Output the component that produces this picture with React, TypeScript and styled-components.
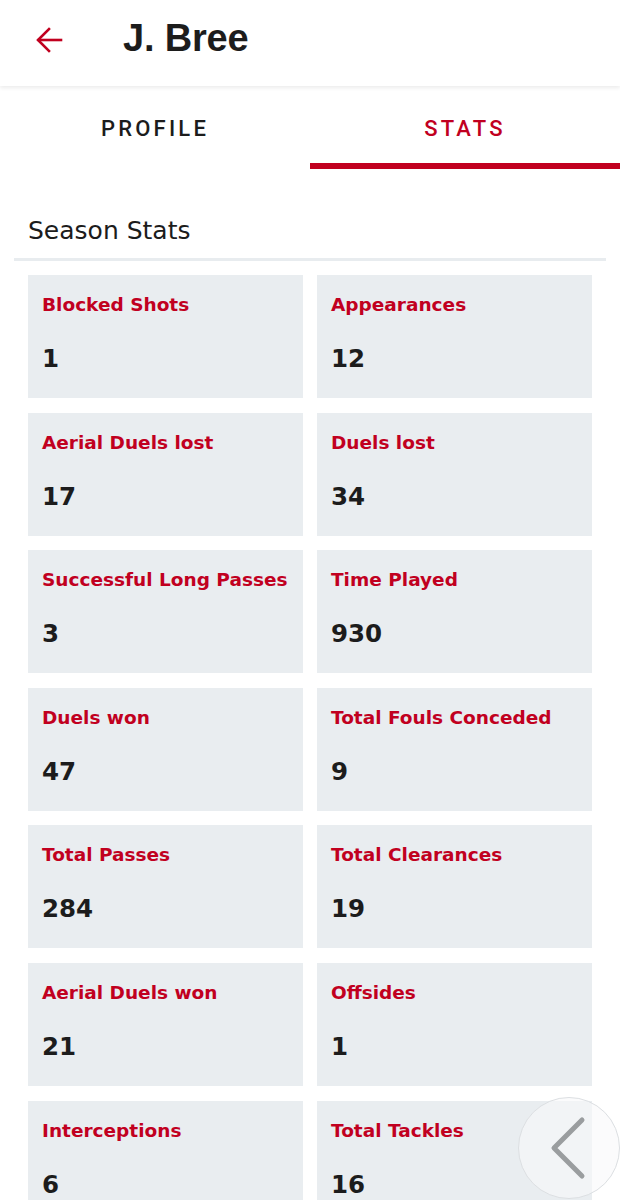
import React from "react";
import styled, { createGlobalStyle } from "styled-components";

const GlobalStyle = createGlobalStyle`
  html, body {
    margin: 0;
    padding: 0;
    background: #ffffff;
    font-family: "DejaVu Sans", "Open Sans", sans-serif;
  }
`;

const Page = styled.div`
  width: 620px;
  height: 1200px;
  overflow: hidden;
  position: relative;
  background: #fff;
`;

const Header = styled.header`
  height: 86px;
  display: flex;
  align-items: center;
  padding-left: 32px;
  padding-bottom: 10px;
  box-sizing: border-box;
  gap: 58px;
  background: #fff;
  box-shadow: 0 2px 4px rgba(0, 0, 0, 0.08);
  position: relative;
  z-index: 1;
`;

const BackButton = styled.button`
  background: none;
  border: none;
  padding: 0;
  width: 33px;
  height: 33px;
  margin-top: 4px;
  display: flex;
  align-items: center;
  justify-content: center;
  cursor: pointer;
`;

const Title = styled.h1`
  margin: 0;
  font-family: "Liberation Sans", Arial, sans-serif;
  font-weight: 700;
  font-size: 38px;
  color: #1c1c1c;
  letter-spacing: -0.2px;
`;

const Tabs = styled.nav`
  display: flex;
  height: 82px;
  margin-top: 1px;
`;

const Tab = styled.div<{ $active?: boolean }>`
  flex: 1;
  display: flex;
  align-items: center;
  justify-content: center;
  font-family: Roboto, sans-serif;
  font-size: 22px;
  font-weight: 500;
  letter-spacing: 3.2px;
  color: ${(p) => (p.$active ? "#c1001f" : "#1c1c1c")};
  border-bottom: 6px solid ${(p) => (p.$active ? "#c1001f" : "transparent")};
  box-sizing: border-box;
  padding-top: 6px;
`;

const Section = styled.section`
  padding: 47px 14px 0;
`;

const SectionTitle = styled.h2`
  margin: 0;
  padding: 0 14px 13px;
  font-size: 25px;
  font-weight: 400;
  color: #1c1c1c;
  border-bottom: 3px solid #e8ecef;
`;

const Grid = styled.div`
  display: grid;
  grid-template-columns: 275px 275px;
  column-gap: 14px;
  row-gap: 14.6px;
  padding: 14px 28px 0;
`;

const Card = styled.div`
  background: #e9edf0;
  height: 123px;
  box-sizing: border-box;
  padding: 16px 14px 0;
`;

const Label = styled.div`
  color: #c1001f;
  font-size: 18.5px;
  font-weight: 700;
  white-space: nowrap;
  line-height: 28px;
`;

const Value = styled.div`
  margin-top: 24px;
  color: #1c1c1c;
  font-size: 24.5px;
  font-weight: 700;
  line-height: 32px;
`;

const FloatingBack = styled.button`
  position: absolute;
  left: 518px;
  top: 1097px;
  width: 102px;
  height: 102px;
  border-radius: 50%;
  border: 1.5px solid #dcdfe2;
  background: rgba(248, 249, 250, 0.6);
  padding: 0;
  display: flex;
  align-items: center;
  justify-content: center;
  cursor: pointer;
`;

const stats: [string, string][] = [
  ["Blocked Shots", "1"],
  ["Appearances", "12"],
  ["Aerial Duels lost", "17"],
  ["Duels lost", "34"],
  ["Successful Long Passes", "3"],
  ["Time Played", "930"],
  ["Duels won", "47"],
  ["Total Fouls Conceded", "9"],
  ["Total Passes", "284"],
  ["Total Clearances", "19"],
  ["Aerial Duels won", "21"],
  ["Offsides", "1"],
  ["Interceptions", "6"],
  ["Total Tackles", "16"],
];

export default function App() {
  return (
    <Page>
      <GlobalStyle />
      <Header>
        <BackButton aria-label="Back">
          <svg width="30" height="30" viewBox="0 0 30 30" fill="none" stroke="#c1001f" strokeWidth="2.6" strokeLinecap="square">
            <path d="M27 15H5" />
            <path d="M15 4L4 15l11 11" />
          </svg>
        </BackButton>
        <Title>J. Bree</Title>
      </Header>

      <Tabs>
        <Tab>PROFILE</Tab>
        <Tab $active>STATS</Tab>
      </Tabs>

      <Section>
        <SectionTitle>Season Stats</SectionTitle>
      </Section>

      <Grid>
        {stats.map(([label, value]) => (
          <Card key={label}>
            <Label>{label}</Label>
            <Value>{value}</Value>
          </Card>
        ))}
      </Grid>

      <FloatingBack aria-label="Back">
        <svg width="40" height="64" viewBox="0 0 40 64" fill="none" stroke="#9a9d9f" strokeWidth="5" strokeLinecap="round" strokeLinejoin="round">
          <path d="M33 4L5 32l28 28" />
        </svg>
      </FloatingBack>
    </Page>
  );
}
